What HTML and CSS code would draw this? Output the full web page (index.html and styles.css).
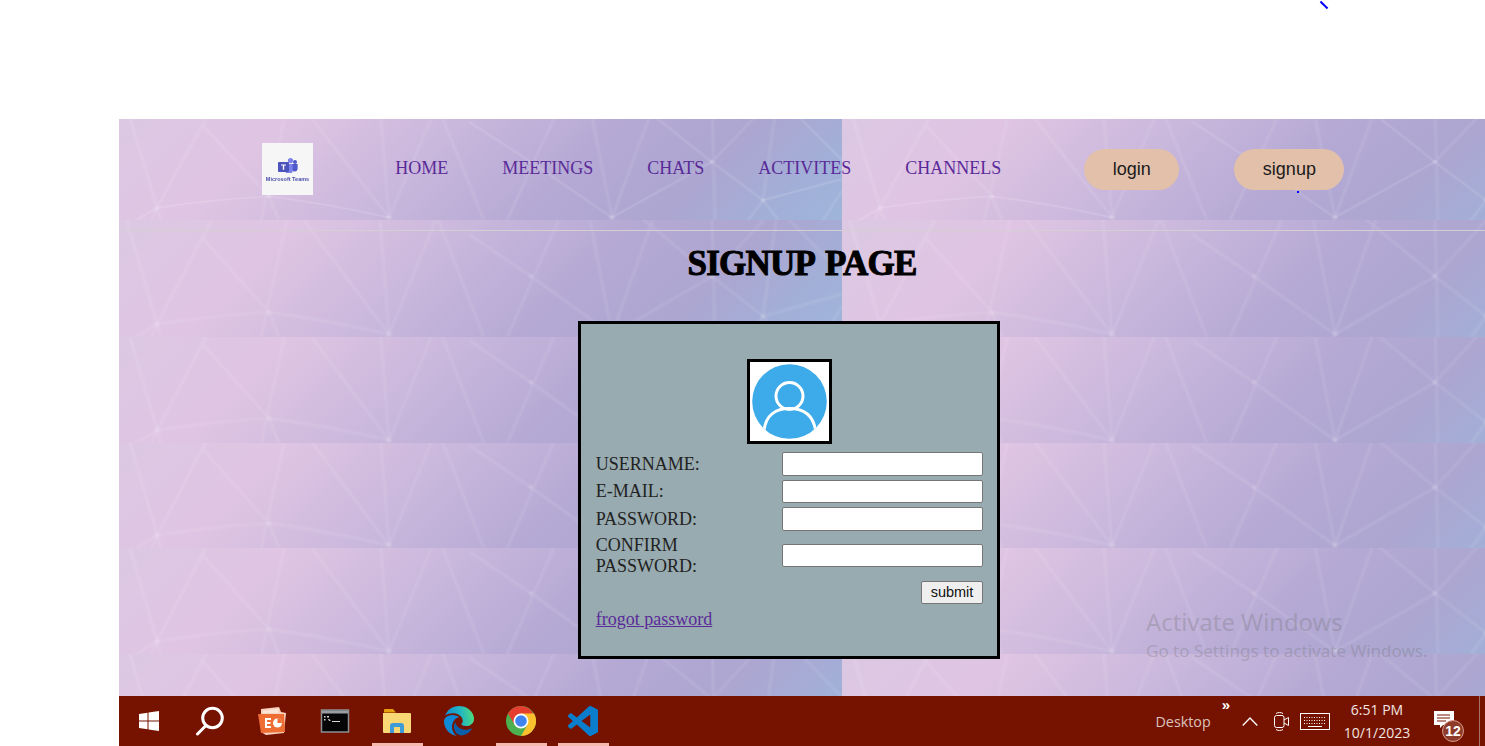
FILE: index.html
```html
<!DOCTYPE html>
<html lang="en">
<head>
<meta charset="utf-8">
<title>Signup Page</title>
<link rel="stylesheet" href="styles.css">
</head>
<body>
<div class="screen">
  <main class="site">
    <header class="nav">
      <a class="logo" href="#">
        <svg class="logo-icon" viewBox="0 0 20 15" aria-hidden="true">
          <circle cx="12.5" cy="2.6" r="2.6" fill="#7b83eb"/>
          <circle cx="17" cy="4" r="2" fill="#5059c9"/>
          <path d="M14 6h5.6v5a3 3 0 0 1-5.6 1z" fill="#5059c9"/>
          <path d="M7 6h7.6v6.5a3.6 3.6 0 0 1-7.2.4z" fill="#7b83eb"/>
          <rect x="0" y="4" width="11" height="10" rx="1" fill="#4b53bc"/>
          <path d="M3 6.4h5v1.2H6.2v4.2H4.8V7.6H3z" fill="#fff"/>
        </svg>
        <span class="logo-text">Microsoft Teams</span>
      </a>
      <nav class="links">
        <a href="#">HOME</a>
        <a href="#">MEETINGS</a>
        <a href="#">CHATS</a>
        <a href="#">ACTIVITES</a>
        <a href="#">CHANNELS</a>
      </nav>
      <div class="auth">
        <button class="pill" type="button">login</button>
        <button class="pill" type="button">signup</button>
      </div>
    </header>
    <section class="content">
      <div class="strip"></div>
      <hr class="rule">
      <h1 class="title">SIGNUP PAGE</h1>
      <form class="card">
        <div class="avatar">
          <svg viewBox="0 0 75 75" aria-hidden="true">
            <defs><clipPath id="disc"><circle cx="37.5" cy="37.5" r="37.3"/></clipPath></defs>
            <circle cx="37.5" cy="37.5" r="37.3" fill="#3daae9"/>
            <g clip-path="url(#disc)" fill="none" stroke="#fff" stroke-width="3">
              <circle cx="37.5" cy="32" r="13.5"/>
              <path d="M12 66c2-15 12-21.5 25.5-21.5S61 51 63.500 66"/>
            </g>
          </svg>
        </div>
        <div class="fields">
          <label for="u">USERNAME:</label><input id="u" type="text">
          <label for="e">E-MAIL:</label><input id="e" type="text">
          <label for="p">PASSWORD:</label><input id="p" type="password">
          <label for="c" class="wrap">CONFIRM PASSWORD:</label><input id="c" type="password">
          <button class="submit" type="button">submit</button>
        </div>
        <a class="forgot" href="#">frogot password</a>
      </form>
    </section>
  </main>

  <footer class="taskbar">
    <div class="apps">
      <span class="app">
        <svg width="20" height="20" viewBox="0 0 20 20"><path fill="#fff" d="M0 2.900 8.500 1.700v7.800H0zM9.500 1.500 20 0v9.500H9.500zM0 10.500h8.500v7.800L0 17.100zM9.500 10.500H20V20L9.500 18.500z"/></svg>
      </span>
      <span class="app nudge">
        <svg width="30" height="30" viewBox="0 0 30 30"><g fill="none" stroke="#fff" stroke-width="3"><circle cx="17.500" cy="12" r="9.800"/><path d="M11 19.500 2.500 28" stroke-linecap="round"/></g></svg>
      </span>
      <span class="app nudge">
        <svg width="30" height="30" viewBox="0 0 30 30">
          <path d="M4 3 22 1l2 5 5 1-2 20-18 2-5-3z" fill="#f9d3c0"/>
          <path d="M6 5 21 3v4H6z" fill="#fbe6da"/>
          <path d="M1 8 27 8l1 18L4 27z" fill="#ee6d33"/>
          <path d="M8 12h6v2h-4v2h3.500v2H10v2h4v2H8z" fill="#fff"/>
          <circle cx="20.500" cy="17" r="4.500" fill="#fff"/>
          <path d="M20.500 17v-4.500a4.500 4.500 0 0 1 4.500 4.500z" fill="#ee6d33"/>
        </svg>
      </span>
      <span class="app">
        <svg width="30" height="30" viewBox="0 0 30 30">
          <rect x="1.500" y="4" width="27" height="22" fill="#050505" stroke="#8b8f92" stroke-width="1.500"/>
          <rect x="2" y="4.500" width="26" height="3" fill="#9a9ea2"/>
          <path d="M4 10h1.500v1.500H4zM4 13h1.500v1.500H4zM7 10h2v1.500H7zM8 13h1l2 1.500-2 .5zM12 15h8v1h-8z" fill="#d8d8d8"/>
        </svg>
      </span>
      <span class="app active">
        <svg width="30" height="30" viewBox="0 0 30 30">
          <path d="M2 4a1 1 0 0 1 1-1h8l3 3.500H2z" fill="#e6a00f"/>
          <path d="M1 7h27a1 1 0 0 1 1 1v18a1 1 0 0 1-1 1H2a1 1 0 0 1-1-1z" fill="#f8d774"/>
          <path d="M8 27v-7a3 3 0 0 1 3-3h8a3 3 0 0 1 3 3v7h-4v-6h-6v6z" fill="#3e9bd8"/>
        </svg>
      </span>
      <span class="app">
        <svg width="30" height="30" viewBox="0 0 24 24">
          <defs>
            <linearGradient id="edgeTop" x1="0" y1="0.6" x2="1" y2="0.5"><stop offset="0" stop-color="#0f8bd6"/><stop offset=".55" stop-color="#21b5c4"/><stop offset="1" stop-color="#4fdc7c"/></linearGradient>
          </defs>
          <path fill="#0b5fa8" d="M21.860 17.860q.14 0 .25.12.1.13.1.25t-.11.33l-.32.46-.43.53-.44.5q-.21.25-.38.42l-.22.23q-.58.53-1.340 1.040-.76.51-1.600.91-.86.4-1.740.64t-1.670.24q-.9 0-1.690-.28-.8-.28-1.480-.78-.68-.5-1.220-1.170-.53-.66-.92-1.440-.38-.77-.58-1.600-.2-.83-.2-1.670 0-1 .32-1.960.33-.97.87-1.800.14.95.55 1.770.41.82 1.020 1.500.6.68 1.380 1.210.78.54 1.640.9.86.36 1.770.56.92.2 1.800.2 1.120 0 2.180-.24 1.060-.23 2.060-.72l.2-.1.2-.05z"/>
          <path fill="#0f8ad8" d="M6.360 16.590q0 1.100.27 2.150.27 1.060.78 2.030.51.96 1.240 1.770.74.82 1.660 1.400-1.470-.2-2.800-.74-1.330-.55-2.480-1.370-1.150-.83-2.080-1.900-.92-1.070-1.580-2.330T.36 14.940Q0 13.540 0 12.060q0-.81.32-1.490.31-.68.83-1.230.53-.55 1.200-.96.66-.4 1.350-.66.74-.27 1.500-.39.78-.12 1.550-.12.7 0 1.420.1.72.12 1.400.35.68.23 1.320.57.63.35 1.160.83-.35 0-.7.07-.33.07-.65.23v-.02q-.63.28-1.200.74-.57.46-1.050 1.040-.48.58-.87 1.260-.38.67-.65 1.390-.27.71-.42 1.440-.15.72-.15 1.380z"/>
          <path fill="url(#edgeTop)" d="M11.960.06q1.700 0 3.330.39 1.630.38 3.070 1.150 1.430.77 2.620 1.930 1.180 1.160 1.980 2.700.49.94.76 1.960.28 1 .28 2.080 0 .89-.23 1.700-.24.8-.69 1.480-.45.68-1.100 1.220-.64.53-1.450.88-.54.24-1.110.36-.58.13-1.160.13-.42 0-.97-.03-.54-.03-1.100-.12-.55-.09-1.050-.28-.5-.19-.84-.5-.12-.09-.23-.24-.1-.16-.1-.33 0-.15.16-.35.16-.2.35-.5.2-.28.36-.68.16-.4.16-.95 0-1.060-.4-1.960-.4-.91-1.060-1.640-.66-.74-1.520-1.280-.86-.55-1.790-.89-.84-.3-1.720-.44-.87-.14-1.760-.14-1.550 0-3.060.45T.94 7.550q.71-1.740 1.810-3.130 1.100-1.380 2.520-2.350Q6.680 1.100 8.370.58q1.700-.52 3.580-.52z"/>
        </svg>
      </span>
      <span class="app active">
        <svg width="30" height="30" viewBox="0 0 30 30">
          <circle cx="15" cy="15" r="15" fill="#4caf50"/>
          <path d="M15 0A15 15 0 0 0 2 7.500L8.500 18.700 15 9h13A15 15 0 0 0 15 0z" fill="#e53e30"/>
          <path d="M28 7.500H15l6.500 11.200L15 30A15 15 0 0 0 28 7.500z" fill="#fbc02d"/>
          <circle cx="15" cy="15" r="7.500" fill="#fff"/>
          <circle cx="15" cy="15" r="5.800" fill="#3f83f0"/>
        </svg>
      </span>
      <span class="app active">
        <svg width="30" height="30" viewBox="0 0 24 24">
          <defs><clipPath id="vsRight"><rect x="17" y="0" width="7" height="24"/></clipPath></defs>
          <path id="vsPath" fill="#0a7dcc" d="M23.150 2.587 18.210.21a1.494 1.494 0 0 0-1.705.29l-9.460 8.630-4.120-3.128a.999.999 0 0 0-1.276.057L.327 7.261A1 1 0 0 0 .326 8.740L3.899 12 .326 15.260a1 1 0 0 0 .001 1.479L1.650 17.940a.999.999 0 0 0 1.276.057l4.120-3.128 9.460 8.630a1.492 1.492 0 0 0 1.704.29l4.942-2.377A1.500 1.500 0 0 0 24 20.060V3.939a1.500 1.500 0 0 0-.85-1.352zm-5.146 14.861L10.826 12l7.178-5.448v10.896z"/>
          <use href="#vsPath" clip-path="url(#vsRight)" style="fill:#1fa3f1"/>
        </svg>
      </span>
    </div>
    <div class="tray">
      <span class="tray-label">Desktop</span>
      <span class="more">»</span>
      <svg class="chevron" width="16" height="9" viewBox="0 0 16 9"><path d="M.7 8.500 8 1l7.300 7.500" fill="none" stroke="#fff" stroke-width="1.300"/></svg>
      <svg class="meet" width="15" height="19" viewBox="0 0 15 19"><g fill="none" stroke="#fff" stroke-width="1"><rect x=".5" y="3.500" width="9.500" height="12" rx="2"/><path d="M10 8l4.500-2.500v8L10 11M2 1.500C4 .2 7 .2 9 1.500M2 17.500c2 1.300 5 1.300 7 0"/></g></svg>
      <svg class="keys" width="30" height="17" viewBox="0 0 30 17"><rect x=".5" y=".5" width="29" height="16" fill="none" stroke="#fff"/><path d="M4 4.500h22M4 7.500h22M4 10.500h22" stroke="#fff" stroke-dasharray="1 1.500"/><path d="M8 13.500h14" stroke="#fff"/></svg>
      <div class="clock"><span>6:51 PM</span><span>10/1/2023</span></div>
      <div class="notify">
        <svg width="20" height="17" viewBox="0 0 20 17"><path d="M0 0h20v14H9l-3 3v-3H0z" fill="#fff"/><path d="M3 4h13M3 7h13M3 10h9" stroke="#761300"/></svg>
        <span class="badge">12</span>
      </div>
      <span class="show-desktop"></span>
    </div>
  </footer>
</div>
<span class="tick"></span>
<span class="dot"></span>
<div class="watermark">
  <p class="wm-title">Activate Windows</p>
  <p class="wm-sub">Go to Settings to activate Windows.</p>
</div>
</body>
</html>
```
FILE: styles.css
```css
:root {
  --tile: url("data:image/svg+xml,<svg xmlns='http://www.w3.org/2000/svg' viewBox='0 -11.33 723 117' preserveAspectRatio='none'><defs><linearGradient id='g' gradientUnits='userSpaceOnUse' x1='0' y1='0' x2='414' y2='414'><stop offset='0' stop-color='%23dcc8e3'/><stop offset='.2' stop-color='%23dfc5e3'/><stop offset='.42' stop-color='%23c9b7dc'/><stop offset='.62' stop-color='%23b4a9d4'/><stop offset='.78' stop-color='%23aca6d1'/><stop offset='.92' stop-color='%23a1b0d8'/><stop offset='1' stop-color='%239fb5da'/></linearGradient><filter id='b' x='-5%25' y='-5%25' width='110%25' height='110%25'><feGaussianBlur stdDeviation='.8'/></filter></defs><rect x='0' y='-12' width='723' height='118' fill='url(%23g)'/><g fill='none' stroke='%23fff' stroke-opacity='.13' stroke-width='2' filter='url(%23b)'><path d='M7.500-12 42 106M93-12 38 93 33 106M83 6 150 81M168-12 142 106M150 81 160 106M184-12 270 103M261-12 270 103M317-12 270 103M319-12 365 106M440-12 388 106M350 3 412 45M412 45 493 103M471-12 493 103M534-12 493 103M493 103 593 45M524-12 593 45M593 45 644 85M645-12 593 45M593-12 596 106M657-12 644 85M644 85 629 106M644 85 660 106M644 85 723 63M670-12 723 43M723 75 704 106M38 93Q95 84 150 81M17 106 38 93M150 81Q205 88 270 103'/></g><g fill='%23fff' fill-opacity='.22' filter='url(%23b)'><circle cx='38' cy='93' r='2'/><circle cx='150' cy='81' r='2'/><circle cx='270' cy='103' r='2.400'/><circle cx='412' cy='45' r='1.800'/><circle cx='493' cy='103' r='2.400'/><circle cx='593' cy='45' r='2.200'/><circle cx='644' cy='85' r='2'/></g></svg>");
}

* { box-sizing: border-box; }

html, body { margin: 0; height: 100%; }

body {
  position: relative;
  background: #fff;
  overflow: hidden;
  font-family: "Liberation Serif", serif;
}

.screen {
  display: flex;
  flex-direction: column;
  height: 746px;
  padding: 119px 0 0 119px;
}

.site {
  flex: 1;
  display: flex;
  flex-direction: column;
  min-height: 0;
  overflow: hidden;
}

/* nav */
.nav {
  display: flex;
  align-items: flex-start;
  height: 101px;
  padding-left: 143px;
  background: var(--tile) 0 -10.83px / 723px 111.83px repeat-x;
}

.logo {
  flex: none;
  display: flex;
  flex-direction: column;
  align-items: center;
  width: 51px;
  height: 52px;
  margin-top: 24px;
  padding-top: 15px;
  background: #f6f6f7;
  text-decoration: none;
}

.logo-icon {
  width: 20px;
  height: 15px;
  filter: blur(.4px);
}

.logo-text {
  margin-top: 3px;
  font: 700 5.500px/7px "Liberation Sans", sans-serif;
  color: #4a4fa8;
  white-space: nowrap;
  filter: blur(.35px);
}

.links {
  display: flex;
  gap: 54px;
  margin: 39px 0 0 82.300px;
}

.links a {
  font-size: 18px;
  line-height: 21px;
  color: #5a2a98;
  text-decoration: none;
  white-space: nowrap;
}

.auth {
  display: flex;
  gap: 55px;
  margin: 30px 0 0 83px;
}

.pill {
  height: 41px;
  padding: 0 28.500px;
  border: 0;
  border-radius: 21px;
  background: #e2c0aa;
  font: 18px/41px "Liberation Sans", sans-serif;
  color: #1a1a1a;
}

/* content */
.content {
  flex: 1;
  min-height: 0;
  background:
    var(--tile) 0 0 / 723px 117px repeat-x,
    var(--tile) 0 105.67px / 723px 117px repeat-x,
    var(--tile) 0 211.33px / 723px 117px repeat-x,
    var(--tile) 0 317px / 723px 117px repeat-x,
    var(--tile) 0 422.67px / 723px 117px repeat-x;
}

.strip { height: 10px; }

.rule {
  height: 1px;
  margin: 0;
  border: 0;
  background: #d3cfd3;
}

.title {
  margin: 13px 0 0;
  height: 40px;
  font-size: 35px;
  line-height: 40px;
  font-weight: 700;
  letter-spacing: -.8px;
  word-spacing: 4px;
  text-align: center;
  color: #000;
  -webkit-text-stroke: 1px #000;
}

.card {
  width: 422px;
  height: 338px;
  margin: 37px 0 0 459px;
  padding: 35px 14.330px 0 14.670px;
  border: 3px solid #000;
  background: #98abb0;
}

.avatar {
  width: 85px;
  height: 85px;
  margin: 0 auto 8px;
  padding: 2px;
  border: 3px solid #000;
  background: #fff;
}

.avatar svg {
  display: block;
  width: 75px;
  height: 75px;
}

.fields {
  display: grid;
  grid-template-columns: 186.330px 201px;
  row-gap: 4px;
  align-items: center;
}

.fields label {
  padding-top: 1px;
  font-size: 18px;
  line-height: 21px;
  color: #222;
}

.fields label.wrap { width: 120px; padding-top: 0; }

.fields input {
  width: 201px;
  height: 23.500px;
  padding: 1px 2px;
  border: 1px solid #767676;
  border-radius: 2px;
  background: #fff;
}

.submit {
  grid-column: 2;
  justify-self: end;
  width: 62px;
  height: 23px;
  padding: 0;
  border: 1px solid #767676;
  border-radius: 2px;
  background: #efefef;
  font: 14.500px "Liberation Sans", sans-serif;
  color: #111;
}

.forgot {
  display: block;
  margin-top: 5.500px;
  font-size: 18px;
  line-height: 21px;
  color: #5a2a98;
}

/* taskbar */
.taskbar {
  flex: none;
  display: flex;
  justify-content: space-between;
  height: 50px;
  padding-left: 5px;
  background: #761300;
}

.apps {
  display: flex;
  gap: 11px;
}

.app {
  display: flex;
  align-items: center;
  justify-content: center;
  width: 51px;
  height: 50px;
  border-bottom: 3px solid transparent;
  padding: 3px 2px 0 0;
}

.app.nudge { padding-right: 4px; }

.app.active { border-bottom-color: #f6b9ae; }

.tray {
  display: flex;
  align-items: center;
  color: #fff;
  font: 14px "Open Sans", sans-serif;
}

.tray-label { font-size: 14.300px; color: #dcc3bc; }

.more {
  align-self: flex-start;
  margin: 1px 0 0 11px;
  font: 700 15px/16px "Liberation Sans", sans-serif;
}

.chevron { margin-left: 12px; }
.meet { margin-left: 16px; }
.keys { margin-left: 11px; }

.clock {
  display: flex;
  flex-direction: column;
  align-items: center;
  gap: 3px;
  width: 68px;
  margin-left: 13px;
  line-height: 20px;
  color: #f2e4e0;
}

.notify {
  position: relative;
  width: 20px;
  height: 17px;
  margin: -3px 0 0 23px;
}

.notify svg { display: block; }

.badge {
  position: absolute;
  left: 8px;
  top: 9px;
  width: 22px;
  height: 22px;
  border: 1px solid #d99a8c;
  border-radius: 50%;
  background: #8e3b2a;
  font: 700 14px/20px "Liberation Sans", sans-serif;
  text-align: center;
}

.show-desktop {
  align-self: stretch;
  width: 1px;
  margin: 0 5px 0 25px;
  background: #a5756a;
}

/* overlays */
.tick {
  position: absolute;
  left: 1319px;
  top: 3.500px;
  width: 10px;
  height: 2px;
  background: #00f;
  transform: rotate(45deg);
}

.dot {
  position: absolute;
  left: 1297px;
  top: 191px;
  width: 2px;
  height: 2px;
  background: #00f;
}

.watermark {
  position: absolute;
  left: 1146px;
  top: 606px;
  font-family: "Noto Sans", sans-serif;
  color: rgba(110, 110, 110, .3);
  pointer-events: none;
}

.watermark p { margin: 0; white-space: nowrap; }
.wm-title { font-size: 23.800px; line-height: 32px; }
.wm-sub { font-size: 17px; line-height: 26px; }
```
